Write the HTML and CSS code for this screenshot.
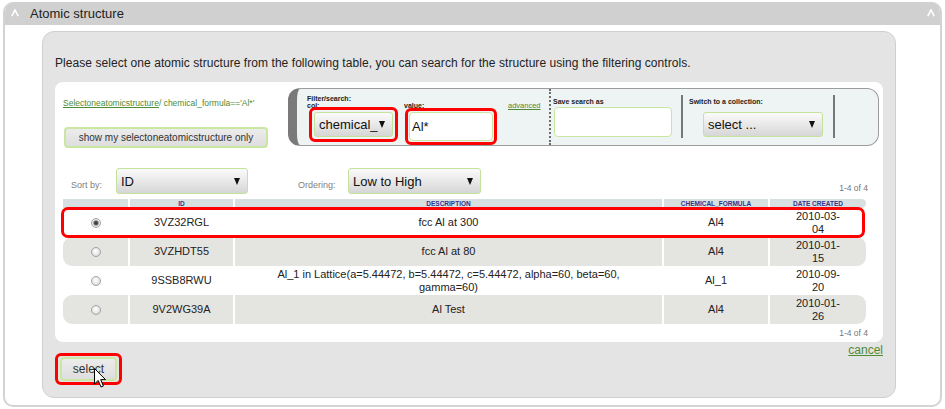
FILE: index.html
```html
<!DOCTYPE html>
<html>
<head>
<meta charset="utf-8">
<title>Atomic structure</title>
<link rel="stylesheet" href="styles.css">
</head>
<body>
<div class="panel">
  <div class="panel-head">
    <svg class="caret" width="8" height="8" viewBox="0 0 8 8"><path d="M0.8 7.2 L4 1 L7.2 7.2" fill="none" stroke="#fff" stroke-width="1.6"/></svg>
    <span class="panel-title">Atomic structure</span>
    <svg class="caret caret-right" width="8" height="8" viewBox="0 0 8 8"><path d="M0.8 7.2 L4 1 L7.2 7.2" fill="none" stroke="#fff" stroke-width="1.6"/></svg>
  </div>
  <div class="panel-body">
    <div class="dialog">
      <p class="intro">Please select one atomic structure from the following table, you can search for the structure using the filtering controls.</p>
      <div class="card">
        <div class="toolbar">
          <div class="toolbar-left">
            <div class="crumb"><a class="crumb-link">Selectoneatomicstructure</a>/ chemical_formula=='Al*'</div>
            <button class="btn btn-mine">show my selectoneatomicstructure only</button>
          </div>
          <div class="filter">
            <div class="filter-main">
              <div class="mini-label">Filter/search:</div>
              <div class="filter-row">
                <div class="field field-col">
                  <div class="mini-label field-label">col:</div>
                  <div class="mark mark-col">
                    <div class="select select-col"><span>chemical_</span><span class="arrow"></span></div>
                  </div>
                </div>
                <div class="field field-value">
                  <div class="mini-label field-label">value:</div>
                  <div class="mark mark-value">
                    <div class="input input-value">Al*</div>
                  </div>
                </div>
                <a class="advanced">advanced</a>
              </div>
            </div>
            <div class="sep-dotted"></div>
            <div class="filter-save">
              <div class="mini-label">Save search as</div>
              <div class="input input-save"></div>
            </div>
            <div class="sep-solid"></div>
            <div class="filter-switch">
              <div class="mini-label">Switch to a collection:</div>
              <div class="select select-switch"><span>select ...</span><span class="arrow"></span></div>
            </div>
            <div class="sep-solid"></div>
          </div>
        </div>

        <div class="sort-row">
          <span class="sort-label sort-label-by">Sort by:</span>
          <div class="select select-sort"><span>ID</span><span class="arrow"></span></div>
          <span class="sort-label sort-label-order">Ordering:</span>
          <div class="select select-sort select-order"><span>Low to High</span><span class="arrow"></span></div>
          <span class="count count-top">1-4 of 4</span>
        </div>

        <div class="table-wrap">
          <table class="grid">
            <colgroup>
              <col class="c-radio"><col class="c-id"><col class="c-desc"><col class="c-formula"><col class="c-date">
            </colgroup>
            <thead>
              <tr>
                <th></th><th>ID</th><th>DESCRIPTION</th><th>CHEMICAL_FORMULA</th><th class="th-last">DATE CREATED</th>
              </tr>
            </thead>
            <tbody>
              <tr class="row-white">
                <td><span class="radio radio-on"></span></td><td>3VZ32RGL</td><td>fcc Al at 300</td><td>Al4</td><td>2010-03-<br>04</td>
              </tr>
              <tr class="row-gray">
                <td><span class="radio"></span></td><td>3VZHDT55</td><td>fcc Al at 80</td><td>Al4</td><td>2010-01-<br>15</td>
              </tr>
              <tr class="row-white">
                <td><span class="radio"></span></td><td>9SSB8RWU</td><td>Al_1 in Lattice(a=5.44472, b=5.44472, c=5.44472, alpha=60, beta=60,<br>gamma=60)</td><td>Al_1</td><td>2010-09-<br>20</td>
              </tr>
              <tr class="row-gray">
                <td><span class="radio"></span></td><td>9V2WG39A</td><td>Al Test</td><td>Al4</td><td>2010-01-<br>26</td>
              </tr>
            </tbody>
          </table>
          <div class="row-mark"></div>
        </div>
        <div class="count count-bottom">1-4 of 4</div>
      </div>

      <div class="cancel-row"><a class="cancel">cancel</a></div>
      <div class="actions">
        <div class="mark mark-select">
          <button class="btn btn-select">select</button>
          <svg class="cursor" width="13" height="21" viewBox="0 0 13 21"><path d="M0.5 0.5 L0.5 16 L4.2 12.4 L7 19 L9.4 18 L6.7 11.6 L11.5 11.6 Z" fill="#fff" stroke="#000" stroke-width="1"/></svg>
        </div>
      </div>
    </div>
  </div>
</div>
</body>
</html>
```

FILE: styles.css
```css
* { box-sizing: border-box; }

html, body {
  margin: 0;
  padding: 0;
  background: #fff;
}

body {
  font-family: "Liberation Sans", Arial, sans-serif;
  color: #222;
}

/* outer panel */
.panel {
  margin: 2px 3px 0 3px;
  border: 2px solid #d3d3d3;
  border-top: 0;
  border-radius: 10px;
  overflow: hidden;
  background: #fff;
}

.panel-head {
  height: 23px;
  background: #d0d0d0;
  display: flex;
  align-items: center;
}

.caret {
  display: block;
  margin-left: 6px;
  margin-top: -2px;
  flex: none;
}

.caret-right {
  margin-left: auto;
  margin-right: 5px;
}

.panel-title {
  margin-left: 11px;
  font-size: 13px;
  color: #222;
}

.panel-body {
  padding: 6px 44px 7px 37px;
}

/* dialog */
.dialog {
  background: #e4e4e4;
  border: 1px solid #cfcfcf;
  border-radius: 12px;
  padding: 24px 12px 12px 12px;
}

.intro {
  margin: 0 0 12px 0;
  font-size: 12px;
  line-height: 14px;
  letter-spacing: 0.06px;
  color: #222;
}

.card {
  background: #fff;
  border-radius: 8px;
  padding: 6px 4px 4px 8px;
}

/* toolbar */
.toolbar {
  display: flex;
  align-items: flex-start;
}

.toolbar-left {
  width: 225px;
  flex: none;
}

.crumb {
  margin-top: 10px;
  font-size: 8.5px;
  line-height: 10px;
  color: #4f8a35;
  white-space: nowrap;
}

.crumb-link {
  text-decoration: underline;
  color: #4f8a35;
}

.btn {
  font-family: "Liberation Sans", Arial, sans-serif;
  color: #333;
  border: 2px solid #c9e7a0;
  border-radius: 4px;
  background: linear-gradient(#ececec, #dedede);
  padding: 0;
  cursor: pointer;
}

.btn-mine {
  display: block;
  margin: 19px 0 0 1px;
  width: 204px;
  height: 21px;
  font-size: 10px;
}

/* filter panel */
.filter {
  flex: 1;
  height: 58px;
  display: flex;
  align-items: flex-start;
  background: #eef3f3;
  border: 1px solid #9c9c9c;
  border-left: 9px solid #7a7a7a;
  border-radius: 12px;
}

.mini-label {
  font-size: 7px;
  font-weight: bold;
  line-height: 8px;
  color: #222;
  white-space: nowrap;
}

.filter-main {
  width: 252px;
  flex: none;
  padding: 6px 0 0 10px;
}

.filter-main > .mini-label {
  line-height: 7px;
}

.filter-row {
  display: flex;
  align-items: flex-start;
}

.field-label {
  height: 5px;
  line-height: 7px;
}

.mark {
  position: relative;
  border: 3px solid #ff0000;
  border-radius: 6px;
}

.mark-col {
  margin-left: 2px;
  padding: 2px;
}

.field-value {
  margin-left: 6px;
}

.mark-value {
  margin: 1px 0 0 1px;
  padding: 1px;
}

.advanced {
  margin: 0 0 0 11px;
  font-size: 7.5px;
  line-height: 8px;
  color: #4f8a35;
  text-decoration: underline;
}

.select {
  display: flex;
  align-items: center;
  justify-content: space-between;
  border: 1px solid #c4e29b;
  border-radius: 3px;
  background: linear-gradient(#fbfbfb, #d6d6d6);
  font-size: 13px;
  color: #111;
  padding: 0 7px 0 4px;
  white-space: nowrap;
}

.arrow {
  width: 0;
  height: 0;
  border-left: 3.5px solid transparent;
  border-right: 3.5px solid transparent;
  border-top: 7px solid #111;
  flex: none;
}

.select-col {
  width: 79px;
  height: 25px;
  padding-right: 7px;
}

.input {
  background: #fff;
  border: 1px solid #c8e6a2;
  border-radius: 4px;
}

.input-value {
  width: 84px;
  height: 29px;
  font-size: 13px;
  line-height: 27px;
  padding-left: 2px;
  color: #111;
}

.sep-dotted {
  width: 2px;
  height: 56px;
  flex: none;
  border-left: 2px dotted #6c6c6c;
}

.filter-save {
  width: 130px;
  flex: none;
  padding: 9px 0 0 2px;
}

.input-save {
  margin: 1px 0 0 1px;
  width: 118px;
  height: 30px;
}

.sep-solid {
  width: 2px;
  height: 43px;
  margin-top: 6px;
  flex: none;
  background: #777;
}

.filter-switch {
  width: 150px;
  flex: none;
  padding: 9px 0 0 6px;
}

.select-switch {
  margin: 6px 0 0 14px;
  width: 120px;
  height: 25px;
}

/* sort row */
.sort-row {
  margin-top: 20px;
  margin-right: 11px;
  height: 26px;
  display: flex;
  align-items: flex-end;
}

.sort-label {
  font-size: 9px;
  line-height: 11px;
  color: #808080;
  padding-bottom: 3px;
  flex: none;
}

.sort-label-by {
  width: 53px;
  padding-left: 8px;
}

.sort-label-order {
  width: 50px;
  margin-left: 50px;
}

.select-sort {
  width: 132px;
  height: 26px;
  flex: none;
}

.select-order {
  width: 133px;
}

.count {
  font-size: 8.5px;
  line-height: 10px;
  color: #777;
}

.count-top {
  margin-left: auto;
  padding-bottom: 1px;
}

.count-bottom {
  margin: 4px 11px 0 0;
  text-align: right;
}

/* table */
.table-wrap {
  position: relative;
  margin: 5px 0 0 -2px;
  width: 807px;
}

.grid {
  width: 807px;
  table-layout: fixed;
  border-collapse: separate;
  border-spacing: 2px 0;
}

.c-radio { width: 65px; }
.c-id { width: 103px; }
.c-desc { width: 427px; }
.c-formula { width: 104px; }
.c-date { width: 96px; }

.grid th {
  height: 9px;
  padding: 0;
  background: #d8dfe1;
  color: #30358f;
  font-size: 6.5px;
  line-height: 9px;
  font-weight: bold;
  text-align: center;
}

.grid th.th-last {
  border-radius: 0 5px 5px 0;
}

.grid td {
  height: 29px;
  padding: 0;
  text-align: center;
  vertical-align: middle;
  font-size: 11px;
  line-height: 13px;
  color: #222;
}

.row-gray td {
  background: #e4e4e0;
}

.row-gray td:first-child {
  border-radius: 9px 0 0 9px;
}

.row-gray td:last-child {
  border-radius: 0 9px 9px 0;
}

.row-mark {
  position: absolute;
  left: 0;
  top: 8px;
  width: 804px;
  height: 31px;
  border: 3px solid #ff0000;
  border-radius: 7px;
  pointer-events: none;
}

.radio {
  display: inline-block;
  width: 10px;
  height: 10px;
  border-radius: 50%;
  border: 1px solid #a2a2a2;
  background: radial-gradient(circle at 45% 40%, #ffffff 0, #eeeeee 40%, #cfcfcf 100%);
  vertical-align: middle;
  margin-left: 1px;
}

.radio-on {
  background: radial-gradient(circle at 50% 50%, #333 0, #555 1.8px, #aaa 2.6px, #eee 3.3px, #d0d0d0 100%);
}

/* bottom */
.cancel-row {
  height: 13px;
  text-align: right;
  line-height: 13px;
}

.cancel {
  font-size: 12px;
  color: #4f8a35;
  text-decoration: underline;
}

.actions {
  display: flex;
  margin-top: -2px;
}

.mark-select {
  padding: 1px 2px;
}

.btn-select {
  display: block;
  width: 57px;
  height: 24px;
  font-size: 12px;
}

.cursor {
  position: absolute;
  left: 36px;
  top: 12px;
}
```
